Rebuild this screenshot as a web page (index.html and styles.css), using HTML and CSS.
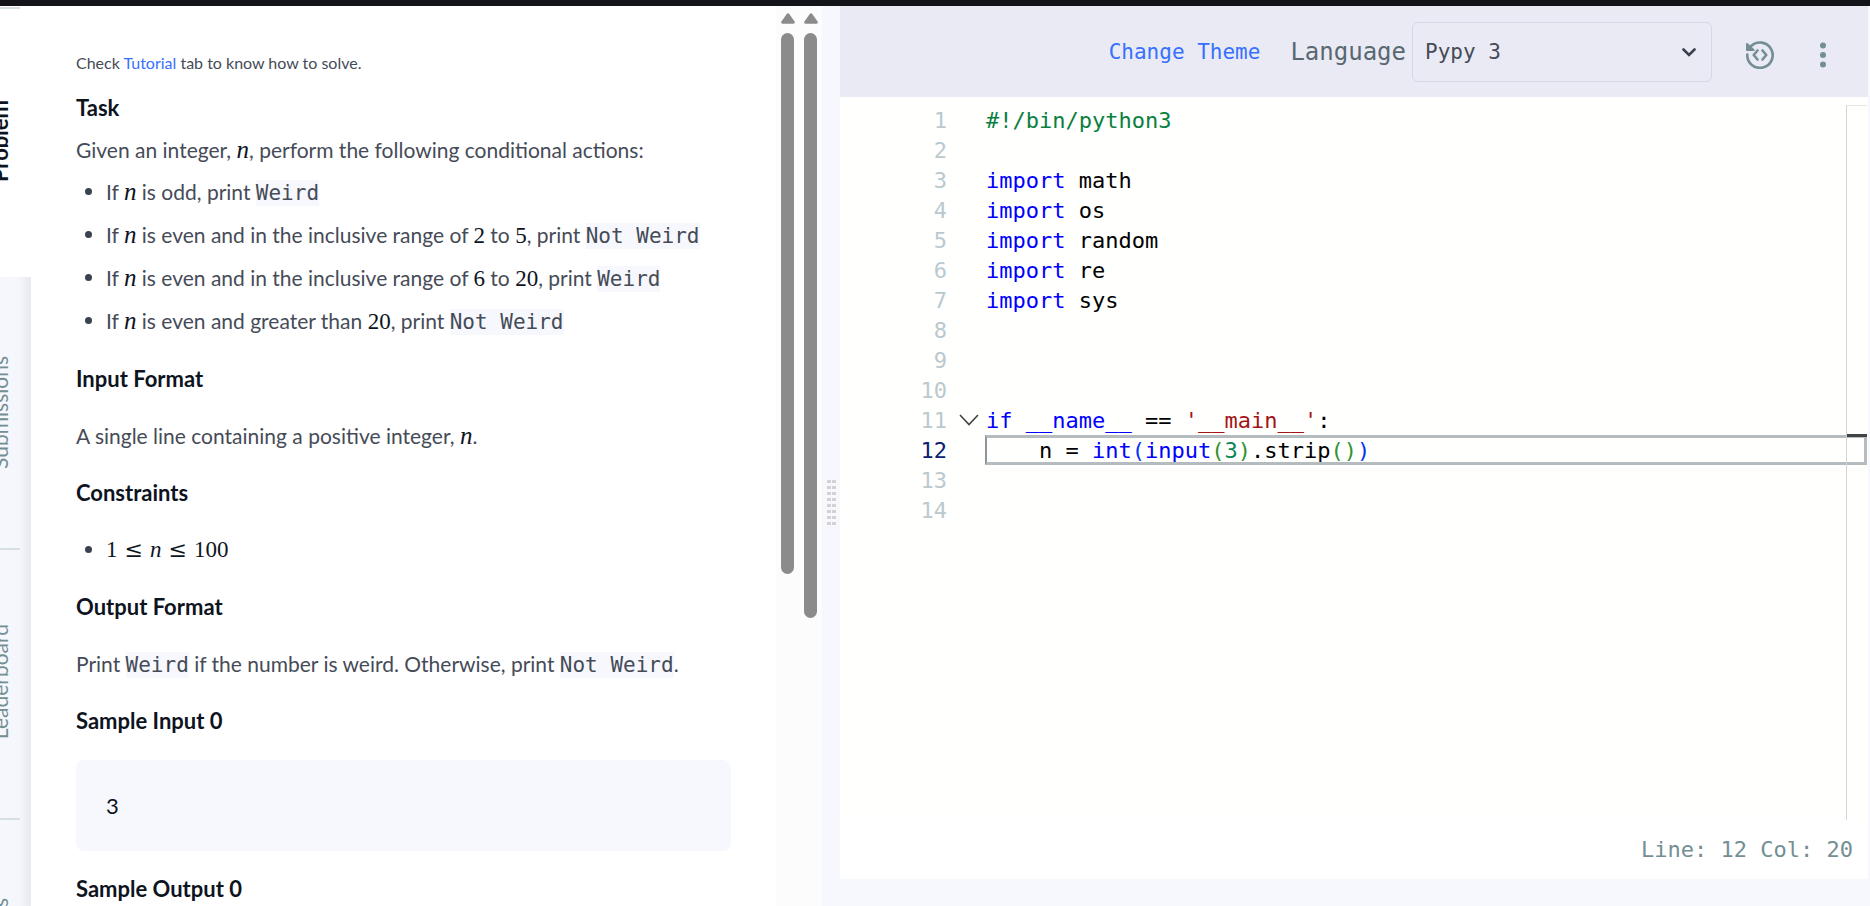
FILE: index.html
```html
<!DOCTYPE html>
<html lang="en">
<head>
<meta charset="utf-8">
<title>Problem</title>
<link rel="stylesheet" href="styles.css">
</head>
<body>
<div class="topbar"></div>
<div class="workspace">
  <nav class="tabs">
    <a class="tab tab-active" href="#problem"><span>Problem</span></a>
    <a class="tab" href="#submissions"><span>Submissions</span></a>
    <a class="tab" href="#leaderboard"><span>Leaderboard</span></a>
    <a class="tab" href="#discussions"><span>Discussions</span></a>
  </nav>

  <main class="problem">
    <p class="hint">Check <a href="#tutorial">Tutorial</a> tab to know how to solve.</p>
    <h2 class="task">Task</h2>
    <p class="intro">Given an integer, <var>n</var>, perform the following conditional actions:</p>
    <ul class="rules">
      <li>If <var>n</var> is odd, print <code>Weird</code></li>
      <li>If <var>n</var> is even and in the inclusive range of <b>2</b> to <b>5</b>, print <code>Not Weird</code></li>
      <li>If <var>n</var> is even and in the inclusive range of <b>6</b> to <b>20</b>, print <code>Weird</code></li>
      <li>If <var>n</var> is even and greater than <b>20</b>, print <code>Not Weird</code></li>
    </ul>
    <h2>Input Format</h2>
    <p>A single line containing a positive integer, <var>n</var>.</p>
    <h2>Constraints</h2>
    <ul class="constraints">
      <li><span class="math"><span>1</span><span class="rel">≤</span><i>n</i><span class="rel">≤</span><span>100</span></span></li>
    </ul>
    <h2>Output Format</h2>
    <p>Print <code>Weird</code> if the number is weird. Otherwise, print <code>Not Weird</code>.</p>
    <h2 class="sample-title">Sample Input 0</h2>
    <pre class="sample">3</pre>
    <h2 class="sample-title">Sample Output 0</h2>
  </main>

  <div class="scroll" aria-hidden="true">
    <svg class="scroll-up" viewBox="0 0 14 11"><path d="M5.6 1.2Q7-.6 8.4 1.2L13.6 8.4Q14.6 10.6 12.4 10.8H1.600Q-.6 10.600 .4 8.400Z" fill="#8b8b8b"/></svg>
    <div class="track"><div class="thumb thumb-inner"></div></div>
  </div>
  <div class="scroll" aria-hidden="true">
    <svg class="scroll-up" viewBox="0 0 14 11"><path d="M5.6 1.2Q7-.6 8.4 1.2L13.6 8.4Q14.6 10.6 12.4 10.8H1.600Q-.6 10.600 .4 8.400Z" fill="#8b8b8b"/></svg>
    <div class="track"><div class="thumb thumb-outer"></div></div>
  </div>

  <div class="splitter">
    <div class="grip">
      <i></i><i></i><i></i><i></i><i></i><i></i><i></i><i></i><i></i><i></i><i></i><i></i><i></i><i></i><i></i><i></i>
    </div>
  </div>

  <section class="editor">
    <header class="toolbar">
      <button class="theme" type="button">Change Theme</button>
      <label class="lang-label" for="lang">Language</label>
      <div class="select">
        <select id="lang"><option>Pypy 3</option></select>
        <svg class="chevron" viewBox="0 0 14 9"><path d="M1.500 1.500L7 7L12.500 1.500" fill="none" stroke="#39424e" stroke-width="2.600" stroke-linecap="round"/></svg>
      </div>
      <button class="icon-button" type="button" aria-label="History">
        <svg class="history" viewBox="0 0 28 28"><g fill="none" stroke="#738f93" stroke-width="2.600" stroke-linecap="round" stroke-linejoin="round"><path d="M1.300 13.500A12.700 12.700 0 1 0 5 5.200"/><path d="M11.500 9.500L7.700 14L11.500 18.500M16.500 9.500L20.300 14L16.500 18.500"/></g><path d="M0 2.500Q.8 1.400 2 2.400L8.500 8.500Q9 9.700 8 10H1Q0 10 0 9Z" fill="#738f93"/></svg>
      </button>
      <button class="icon-button" type="button" aria-label="More">
        <svg class="dots" viewBox="0 0 6 26"><g fill="#738f93"><circle cx="3" cy="3.500" r="3"/><circle cx="3" cy="13" r="3"/><circle cx="3" cy="22.500" r="3"/></g></svg>
      </button>
    </header>

    <div class="code">
      <div class="line"><span class="num">1</span><span class="src c-comment">#!/bin/python3</span></div>
      <div class="line"><span class="num">2</span><span class="src"></span></div>
      <div class="line"><span class="num">3</span><span class="src"><span class="c-key">import</span> math</span></div>
      <div class="line"><span class="num">4</span><span class="src"><span class="c-key">import</span> os</span></div>
      <div class="line"><span class="num">5</span><span class="src"><span class="c-key">import</span> random</span></div>
      <div class="line"><span class="num">6</span><span class="src"><span class="c-key">import</span> re</span></div>
      <div class="line"><span class="num">7</span><span class="src"><span class="c-key">import</span> sys</span></div>
      <div class="line"><span class="num">8</span><span class="src"></span></div>
      <div class="line"><span class="num">9</span><span class="src"></span></div>
      <div class="line"><span class="num">10</span><span class="src"></span></div>
      <div class="line"><span class="num">11</span><svg class="fold" viewBox="0 0 20 12"><path d="M1 1L10 10.500L19 1" fill="none" stroke="#424242" stroke-width="1.600"/></svg><span class="src"><span class="c-key">if</span> <span class="c-key">__name__</span> == <span class="c-str">'__main__'</span>:</span></div>
      <div class="line line-current"><span class="num">12</span><span class="src">    n = <span class="c-key">int</span><span class="c-p1">(</span><span class="c-key">input</span><span class="c-p2">(</span><span class="c-num">3</span><span class="c-p2">)</span>.strip<span class="c-p2">()</span><span class="c-p1">)</span></span></div>
      <div class="line"><span class="num">13</span><span class="src"></span></div>
      <div class="line"><span class="num">14</span><span class="src"></span></div>
      <div class="overview"><div class="overview-mark"></div></div>
    </div>
    <footer class="status">Line: 12 Col: 20</footer>
  </section>
</div>
</body>
</html>
```
FILE: styles.css
```css
* { box-sizing: border-box; }

body {
  margin: 0;
  height: 100vh;
  overflow: hidden;
  display: flex;
  flex-direction: column;
  background: #f7f8fd;
  font-family: Lato, "Open Sans", sans-serif;
  font-size: 22px;
  color: #454b57;
}

button, select {
  font: inherit;
  color: inherit;
  background: none;
  border: 0;
  padding: 0;
  margin: 0;
}

.topbar { height: 6px; flex: none; background: #13141a; }

.workspace {
  flex: 1;
  min-height: 0;
  display: grid;
  grid-template-columns: 31px minmax(0, 745fr) 23px 23px 18px minmax(0, 1030fr);
  grid-template-rows: minmax(0, 1fr);
}

/* vertical tab strip, scrolled partly off the left edge */
.tabs {
  width: 62px;
  margin-left: -31px;
  overflow: hidden;
  display: flex;
  flex-direction: column;
  background: linear-gradient(to right, #f6f7fd 45px, #f4f5fa 52px, #e8e9ee);
}

.tab {
  flex: none;
  height: 270px;
  display: flex;
  align-items: center;
  justify-content: center;
  color: #738f93;
  font-size: 21px;
  text-decoration: none;
  background: linear-gradient(#d6e0e2, #d6e0e2) left top 1px / 51px 2px no-repeat;
}

.tab span { writing-mode: vertical-rl; transform: rotate(180deg); line-height: 24px; }

.tab-active { height: 271px; background-color: #fff; color: #0e141e; font-weight: 700; font-size: 22px; }
.tab-active + .tab { background: none; }

.problem {
  overflow: hidden;
  padding: 43px 45px 0;
  background: #fff;
  font-size: 21px;
  line-height: 27px;
}

.problem p, .problem h2, .problem ul { margin: 0 0 30px; padding: 0; }
.problem h2 { font-size: 22px; font-weight: 700; color: #0e141e; }
.problem .hint { font-size: 16px; margin-bottom: 18px; }
.problem .task, .problem .intro { margin-bottom: 15px; }
.hint a { color: #3770ff; text-decoration: none; }

.problem ul { list-style: none; }
.problem li { position: relative; padding-left: 30px; }
.problem li::before {
  content: "";
  position: absolute;
  left: 9px;
  top: 10px;
  width: 7px;
  height: 7px;
  border-radius: 50%;
  background: #39424e;
}
.problem .rules { display: grid; gap: 16px; margin-bottom: 31px; }

.problem var, .problem b, .math {
  font-family: "Liberation Serif", serif;
  font-size: 23px;
  line-height: 1;
  font-weight: 400;
  color: #0e141e;
}
.problem var { font-size: 25px; }
.math { display: flex; align-items: center; gap: 7px; height: 27px; }
.rel { font-family: "DejaVu Serif", serif; font-size: 22px; }

.problem code {
  font-family: "DejaVu Sans Mono", monospace;
  font-size: 21px;
  line-height: 1;
  padding: 1px 0;
  background: #f7f8fd;
}

.problem .sample-title { margin-bottom: 26px; }

.sample {
  margin: 0 0 24px;
  padding: 32px 30px;
  border-radius: 8px;
  background: #f7f8fd;
  font-family: inherit;
  font-size: 22px;
  color: #0e141e;
}

.scroll {
  display: flex;
  flex-direction: column;
  align-items: center;
  gap: 9px;
  padding-top: 7px;
  background: #fcfcfc;
}
.scroll-up { width: 14px; height: 11px; flex: none; }
.track { flex: 1; width: 13px; }
.thumb { border-radius: 7px; background: #8b8b8b; }
.thumb-inner { height: 62%; }
.thumb-outer { height: 67%; }

.splitter {
  display: flex;
  align-items: center;
  justify-content: center;
  padding-top: 93px;
}
.grip { display: grid; grid-template-columns: 4px 4px; gap: 3px 1px; }
.grip i { height: 3px; background: #d3d3d3; }

.editor {
  margin: 0 2px 27px 0;
  display: flex;
  flex-direction: column;
  background: #fff;
  font-family: "DejaVu Sans Mono", monospace;
}

.toolbar {
  height: 91px;
  flex: none;
  display: flex;
  align-items: center;
  justify-content: flex-end;
  padding-right: 42px;
  background: #eaeaf4;
  font-size: 21px;
}
.theme { color: #3770ff; margin-right: 30px; cursor: pointer; }
.lang-label { font-size: 24px; color: #576871; margin-right: 6px; }

.select { position: relative; width: 300px; height: 60px; margin-right: 34px; }
.select select {
  width: 100%;
  height: 100%;
  padding: 0 12px;
  appearance: none;
  border: 1px solid #d6d6e5;
  border-radius: 6px;
}
.chevron { position: absolute; right: 16px; top: 26px; width: 14px; height: 9px; }

.icon-button { display: flex; padding-top: 6px; cursor: pointer; }
.history { width: 28px; height: 28px; margin-right: 46px; }
.dots { width: 6px; height: 26px; }

.code {
  position: relative;
  flex: 1;
  min-height: 0;
  padding-top: 8px;
  background: #fffffe;
  font-size: 22px;
  line-height: 32px;
  color: #000;
}
.line { position: relative; display: flex; height: 30px; }
.num { width: 107px; margin-right: 39px; flex: none; text-align: right; color: #b9c9cf; }
.src { flex: 1; white-space: pre; }
.fold { position: absolute; left: 119px; top: 9px; width: 20px; height: 12px; }
.line-current .num { color: #0b216f; }
.line-current::after {
  content: "";
  position: absolute;
  inset: 0 1px 0 145px;
  border: 3px solid #b4bcc0;
  border-left: 2px solid #8f9599;
}
.c-key { color: #0000ff; }
.c-comment { color: #098040; }
.c-str { color: #a31515; }
.c-num { color: #098658; }
.c-p1 { color: #0431fa; }
.c-p2 { color: #319331; }

.overview {
  position: absolute;
  top: 8px;
  right: 1px;
  bottom: 0;
  width: 21px;
  border-left: 1px solid #d5d5d5;
  border-top: 1px solid #e8e8e8;
}
.overview-mark { margin-top: 328px; height: 3px; background: #424242; }

.status {
  height: 59px;
  flex: none;
  display: flex;
  align-items: center;
  justify-content: flex-end;
  padding-right: 15px;
  font-size: 22px;
  color: #738f93;
}
```
